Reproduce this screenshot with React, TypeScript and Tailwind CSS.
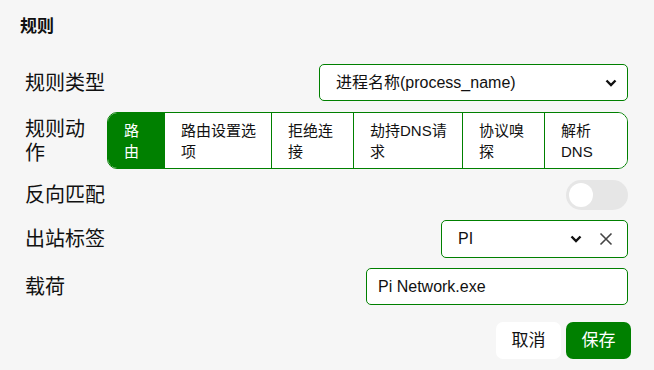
import React, { useState } from "react";

const font = { fontFamily: '"Liberation Sans", "Noto Sans CJK SC", sans-serif' };

const actions = [
    { label: "路由", w: "w-[56px] pr-[12px]" },
    { label: "路由设置选项", w: "w-[107px] pr-[6px]" },
    { label: "拒绝连接", w: "w-[82px] pr-[6px]" },
    { label: "劫持DNS请求", w: "w-[109px] pr-[6px]" },
    { label: "协议嗅探", w: "w-[82px] pr-[6px]" },
    { label: "解析DNS", w: "w-[83px] pr-[6px]" },
];

const Chevron = () => (
    <svg width="12" height="8" viewBox="0 0 12 8" fill="none">
        <path d="M1.5 1.5L6 6L10.5 1.5" stroke="#111" strokeWidth="2.4" />
    </svg>
);

export default function App() {
    const [active, setActive] = useState(0);
    const [reverse, setReverse] = useState(false);

    return (
        <div className="w-full h-[370px] bg-[#f6f6f6] text-[#111]" style={font}>
            <div className="pl-[20px] pt-[15px] h-[24px] box-content text-[17px] font-bold leading-[24px]">
                规则
            </div>

            <div className="flex flex-col gap-[10px] pl-[25px] pr-[26px] mt-[25px]">
                {/* Rule type */}
                <div className="flex items-center justify-between">
                    <span className="text-[20px] leading-[28px]">规则类型</span>
                    <div className="w-[309px] h-[37px] flex items-center justify-between pl-[16px] pr-[10px] bg-white border border-[#008000] rounded-[5px] text-[16px]">
                        <span>进程名称(process_name)</span>
                        <Chevron />
                    </div>
                </div>

                {/* Rule action */}
                <div className="flex items-center justify-between mt-[1px] mb-[1px]">
                    <span className="flex-1 min-w-0 pr-[20px] text-[20px] leading-[24px]">规则动作</span>
                    <div className="flex h-[57px] bg-white border border-[#008000] rounded-[10px] overflow-hidden">
                        {actions.map((a, i) => (
                            <button
                                key={a.label}
                                onClick={() => setActive(i)}
                                className={`${a.w} shrink-0 pl-[16px] text-left text-[15px] leading-[21px] ${i > 0 ? "border-l border-[#008000]" : ""} ${active === i ? "bg-[#008000] text-white" : "bg-white text-[#111]"}`}
                            >
                                {a.label}
                            </button>
                        ))}
                    </div>
                </div>

                {/* Reverse match */}
                <div className="flex items-center justify-between h-[30px]">
                    <span className="text-[20px] leading-[28px]">反向匹配</span>
                    <button
                        onClick={() => setReverse(!reverse)}
                        className={`w-[62px] h-[30px] rounded-full p-[3px] flex ${reverse ? "bg-[#008000] justify-end" : "bg-[#e6e6e6] justify-start"}`}
                    >
                        <span className="w-[24px] h-[24px] rounded-full bg-white" />
                    </button>
                </div>

                {/* Outbound tag */}
                <div className="flex items-center justify-between">
                    <span className="text-[20px] leading-[28px]">出站标签</span>
                    <div className="w-[187px] h-[38px] flex items-center pl-[16px] pr-[14px] bg-white border border-[#008000] rounded-[5px] text-[16px]">
                        <span className="flex-1">PI</span>
                        <Chevron />
                        <svg className="ml-[17px]" width="14" height="14" viewBox="0 0 14 14" fill="none">
                            <path d="M1.5 1.5L12.5 12.5M12.5 1.5L1.5 12.5" stroke="#444" strokeWidth="1.6" />
                        </svg>
                    </div>
                </div>

                {/* Payload */}
                <div className="flex items-center justify-between">
                    <span className="text-[20px] leading-[28px]">载荷</span>
                    <input
                        defaultValue="Pi Network.exe"
                        className="w-[262px] h-[37px] px-[11px] bg-white border border-[#008000] rounded-[5px] text-[16px] outline-none"
                    />
                </div>

                {/* Buttons */}
                <div className="flex justify-end gap-[5px] mt-[7px] -mr-[3px]">
                    <button className="w-[65px] h-[37px] rounded-[7px] bg-white text-[17px]">取消</button>
                    <button className="w-[65px] h-[37px] rounded-[7px] bg-[#008000] text-white text-[17px]">保存</button>
                </div>
            </div>
        </div>
    );
}
